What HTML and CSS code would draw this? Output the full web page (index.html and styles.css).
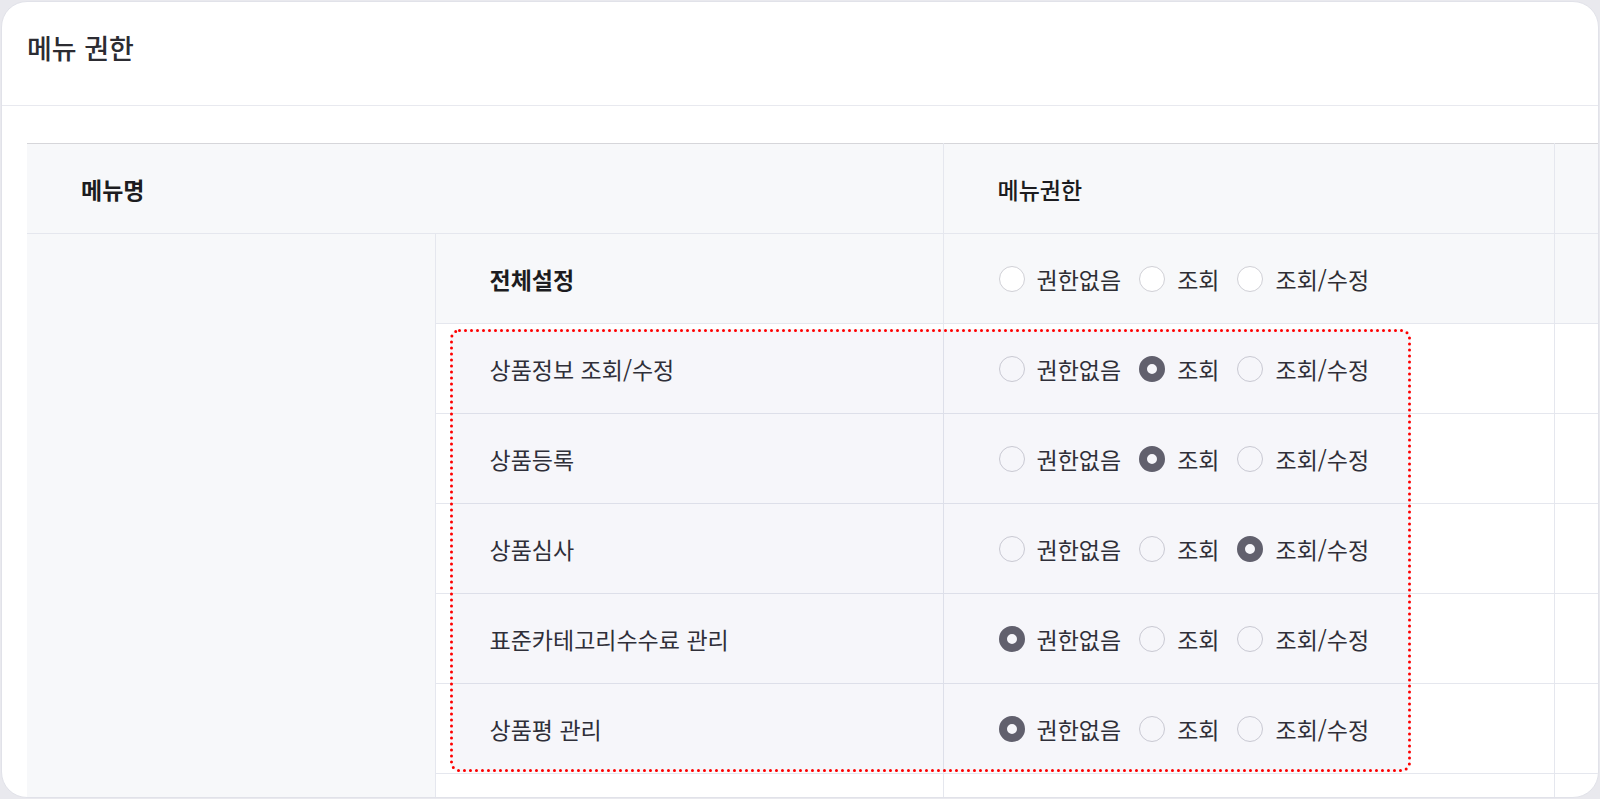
FILE: index.html
```html
<!DOCTYPE html>
<html lang="ko">
<head>
    <meta charset="UTF-8">
    <meta name="viewport" content="width=device-width, initial-scale=1.0">
    <title>메뉴 권한</title>
    <link rel="stylesheet" href="styles.css">
</head>
<body>
    <div class="card">
        <div class="card-header">
            <h2 class="card-title">메뉴 권한</h2>
        </div>
        <div class="card-body">
            <div class="table-wrap">
                <table class="perm-table">
                    <colgroup>
                        <col class="col-group">
                        <col class="col-menu">
                        <col class="col-perm">
                        <col class="col-extra">
                    </colgroup>
                    <thead>
                        <tr>
                            <th colspan="2" class="th-strong">메뉴명</th>
                            <th class="th-perm">메뉴권한</th>
                            <th></th>
                        </tr>
                    </thead>
                    <tbody>
                        <tr class="row-all">
                            <td class="group-cell" rowspan="7"></td>
                            <td class="menu-name strong">전체설정</td>
                            <td>
                                <div class="radio-group">
                                    <label class="radio"><input type="radio" name="all"><span>권한없음</span></label>
                                    <label class="radio"><input type="radio" name="all"><span>조회</span></label>
                                    <label class="radio"><input type="radio" name="all"><span>조회/수정</span></label>
                                </div>
                            </td>
                            <td></td>
                        </tr>
                        <tr>
                            <td class="menu-name">상품정보 조회/수정</td>
                            <td>
                                <div class="radio-group">
                                    <label class="radio"><input type="radio" name="m1"><span>권한없음</span></label>
                                    <label class="radio"><input type="radio" name="m1" checked><span>조회</span></label>
                                    <label class="radio"><input type="radio" name="m1"><span>조회/수정</span></label>
                                </div>
                            </td>
                            <td></td>
                        </tr>
                        <tr>
                            <td class="menu-name">상품등록</td>
                            <td>
                                <div class="radio-group">
                                    <label class="radio"><input type="radio" name="m2"><span>권한없음</span></label>
                                    <label class="radio"><input type="radio" name="m2" checked><span>조회</span></label>
                                    <label class="radio"><input type="radio" name="m2"><span>조회/수정</span></label>
                                </div>
                            </td>
                            <td></td>
                        </tr>
                        <tr>
                            <td class="menu-name">상품심사</td>
                            <td>
                                <div class="radio-group">
                                    <label class="radio"><input type="radio" name="m3"><span>권한없음</span></label>
                                    <label class="radio"><input type="radio" name="m3"><span>조회</span></label>
                                    <label class="radio"><input type="radio" name="m3" checked><span>조회/수정</span></label>
                                </div>
                            </td>
                            <td></td>
                        </tr>
                        <tr>
                            <td class="menu-name">표준카테고리수수료 관리</td>
                            <td>
                                <div class="radio-group">
                                    <label class="radio"><input type="radio" name="m4" checked><span>권한없음</span></label>
                                    <label class="radio"><input type="radio" name="m4"><span>조회</span></label>
                                    <label class="radio"><input type="radio" name="m4"><span>조회/수정</span></label>
                                </div>
                            </td>
                            <td></td>
                        </tr>
                        <tr>
                            <td class="menu-name">상품평 관리</td>
                            <td>
                                <div class="radio-group">
                                    <label class="radio"><input type="radio" name="m5" checked><span>권한없음</span></label>
                                    <label class="radio"><input type="radio" name="m5"><span>조회</span></label>
                                    <label class="radio"><input type="radio" name="m5"><span>조회/수정</span></label>
                                </div>
                            </td>
                            <td></td>
                        </tr>
                        <tr class="row-empty">
                            <td></td>
                            <td></td>
                            <td></td>
                        </tr>
                    </tbody>
                </table>

                <!-- selection box drawn over the product rows -->
                <div class="highlight">
                    <svg width="961" height="443" viewBox="0 0 961 443">
                        <rect x="1.5" y="1.5" width="958" height="440" rx="8" ry="8" fill="none" stroke="#ff0000" stroke-width="3" stroke-linecap="round" stroke-dasharray="0 6"></rect>
                    </svg>
                </div>
            </div>
        </div>
    </div>
</body>
</html>
```

FILE: styles.css
```css
* {
    box-sizing: border-box;
}
body {
    margin: 0;
    padding: 1px;
    background-color: #e9e9ee;
    font-family: "Noto Sans CJK KR", "Noto Sans", sans-serif;
    color: #333;
}
.card {
    height: 797px;
    background: #fff;
    border: 1px solid #e1e2e9;
    border-radius: 26px;
    overflow: hidden;
}
.card-header {
    height: 104px;
    padding: 26px 25px 0;
    border-bottom: 1px solid #e8e9ef;
}
.card-title {
    margin: 0;
    font-size: 27px;
    font-weight: 500;
    line-height: 40px;
    color: #2c2c32;
}
.card-body {
    padding: 37px 0 0 25px;
}
.table-wrap {
    position: relative;
    width: 1700px;
}
.perm-table {
    width: 100%;
    table-layout: fixed;
    border-collapse: collapse;
    border-top: 1px solid #d6d6da;
    font-size: 23px;
}
.col-group {
    width: 408px;
}
.col-menu {
    width: 508px;
}
.col-perm {
    width: 611px;
}
.perm-table th,
.perm-table td {
    height: 90px;
    padding: 0 0 0 54px;
    text-align: left;
    vertical-align: middle;
    border-bottom: 1px solid #e5e7ee;
    border-right: 1px solid #e5e7ee;
}
.perm-table thead th {
    background-color: #f7f8fa;
    color: #1c1c20;
}
.th-strong {
    font-weight: 700;
}
.th-perm {
    font-weight: 500;
}
.row-all td {
    background-color: #f7f8fa;
}
.group-cell {
    background-color: #f7f8fa;
}
.menu-name {
    color: #2e2e34;
}
.menu-name.strong {
    font-weight: 700;
    color: #1c1c20;
}
.row-empty td {
    height: 60px;
}
.radio-group {
    display: flex;
    align-items: center;
    gap: 17px;
}
.radio {
    display: flex;
    align-items: center;
    gap: 12px;
    color: #2e2e34;
    cursor: pointer;
}
.radio input {
    appearance: none;
    -webkit-appearance: none;
    width: 26px;
    height: 26px;
    margin: 0 0 0 1px;
    border: 1px solid #d0d0d6;
    border-radius: 50%;
    background: #fff;
}
.radio input:checked {
    border: 8.5px solid #62616b;
}
.highlight {
    position: absolute;
    left: 423px;
    top: 186px;
    width: 961px;
    height: 443px;
    border-radius: 9px;
    background-color: rgba(70, 70, 150, 0.05);
    pointer-events: none;
}
.highlight svg {
    display: block;
}
```
